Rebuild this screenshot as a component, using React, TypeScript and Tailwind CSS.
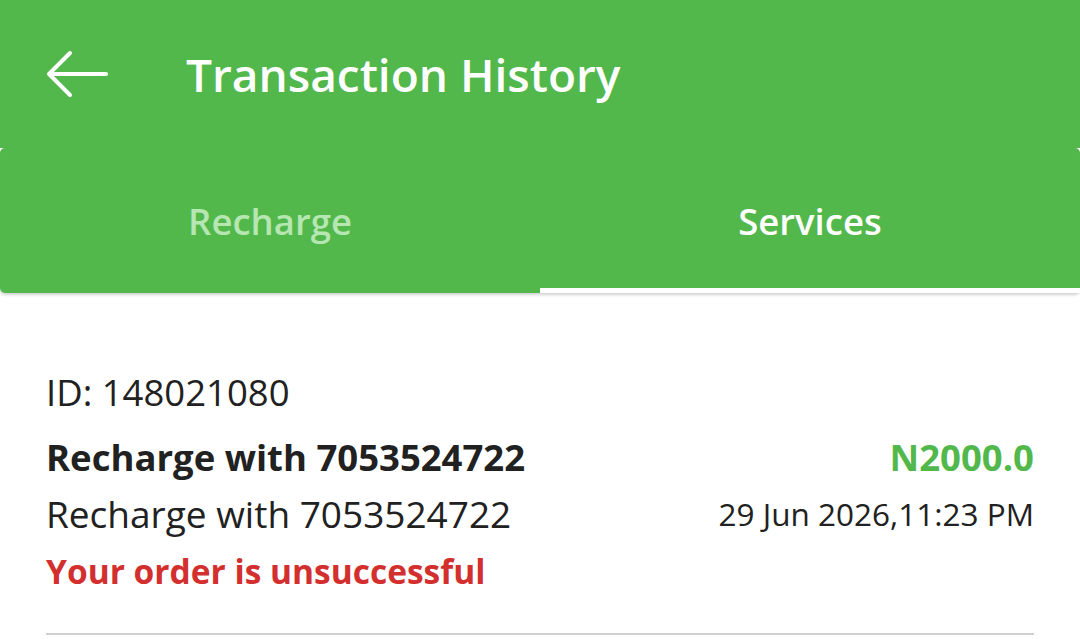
const FONT = { fontFamily: '"Open Sans", "Noto Sans", sans-serif' };

function BackArrow() {
  return (
    <svg width="62" height="48" viewBox="0 0 62 48" fill="none" stroke="currentColor" strokeWidth="4" strokeLinecap="round" strokeLinejoin="round">
      <path d="M60 24H4" />
      <path d="M24 3L3 24l21 21" />
    </svg>
  );
}

export default function App() {
  return (
    <div className="min-h-[639px] w-[1080px] bg-white" style={FONT}>
      <header className="flex h-[148px] items-center bg-[#52b84c]">
        <button className="ml-[46px] flex items-center text-white">
          <BackArrow />
        </button>
        <h1 className="ml-[78px] text-[46px] font-semibold leading-none text-white">
          Transaction History
        </h1>
      </header>
      <nav className="flex h-[145px] rounded-[5px] bg-[#52b84c] shadow-[0_2px_3px_rgba(0,0,0,0.18)]">
        <div className="flex flex-1 flex-col">
          <div className="flex flex-1 items-center justify-center pt-[6px] text-[36.5px] font-semibold text-[#b6e6b1]">
            Recharge
          </div>
          <div className="h-[5px]" />
        </div>
        <div className="flex flex-1 flex-col">
          <div className="flex flex-1 items-center justify-center pt-[6px] text-[36.5px] font-semibold text-white">
            Services
          </div>
          <div className="h-[5px] bg-white" />
        </div>
      </nav>

      <section className="mx-[46px] mt-[74px] border-b-2 border-[#d0d0d0] pb-[37px] text-[#212121]">
        <p className="text-[36.5px] leading-[50px]">ID: 148021080</p>
        <div className="mt-[15px] flex items-center justify-between leading-[50px]">
          <p className="text-[36.5px] font-bold">Recharge with 7053524722</p>
          <p className="text-[36.5px] font-bold text-[#52b84c]">N2000.0</p>
        </div>
        <div className="mt-[7px] flex items-center justify-between leading-[50px]">
          <p className="text-[37px]">Recharge with 7053524722</p>
          <p className="text-[31.5px]">29 Jun 2026,11:23 PM</p>
        </div>
        <p className="mt-[7px] text-[33.5px] font-bold leading-[50px] text-[#d32f2f]">
          Your order is unsuccessful
        </p>
      </section>
    </div>
  );
}
